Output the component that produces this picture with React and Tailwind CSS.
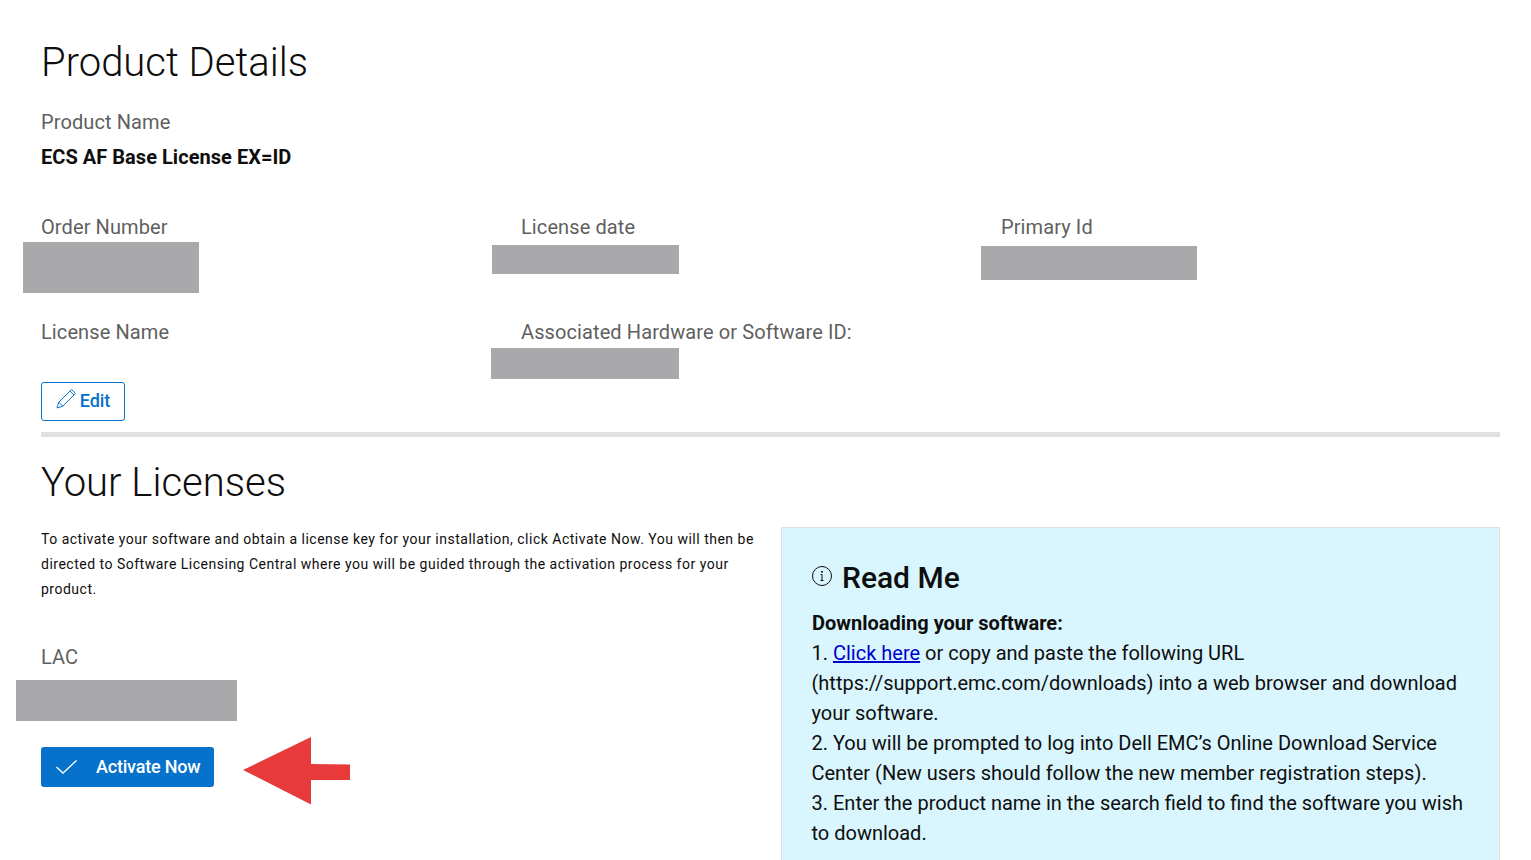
import React from "react";

function Label({ children }) {
  return <div className="text-[20px] leading-[24px] tracking-[0.1px] text-[#5f5f5f]">{children}</div>;
}

function Redacted({ className }) {
  return <div className={"absolute bg-[#a9a9ac] " + className} />;
}

export default function App() {
  return (
    <div className="relative h-screen overflow-hidden bg-white font-['Roboto',sans-serif] text-[#0e0e0e]">
      <div className="pl-[41px] pr-[31px] pt-[39px]">
        <h1 className="text-[40px] leading-[48px] font-light">Product Details</h1>

        <div className="mt-[23px]">
          <Label>Product Name</Label>
        </div>
        <div className="mt-[11px] text-[20px] leading-[24px] font-bold tracking-[0.04px]">ECS AF Base License EX=ID</div>

        <div className="mt-[46px] grid grid-cols-[480px_480px_1fr]">
          <Label>Order Number</Label>
          <Label>License date</Label>
          <Label>Primary Id</Label>
        </div>
        <div className="mt-[81px] grid grid-cols-[480px_1fr]">
          <Label>License Name</Label>
          <Label>Associated Hardware or Software ID:</Label>
        </div>

        <button className="mt-[38px] flex h-[39px] w-[84px] items-center justify-center gap-[3px] rounded-[3px] border border-[#0672cb] text-[18px] font-medium text-[#0672cb]">
          <svg width="21" height="21" viewBox="0 0 21 21" fill="none" stroke="currentColor" strokeWidth="1" className="mb-[7px]">
            <path d="M1 20l1.800-5.800L15.600 1.500l3.900 3.900L6.800 18.200z" />
            <path d="M2.800 14.200l4 4M14 3.100l3.900 3.900" />
          </svg>
          <span className="-translate-y-px">Edit</span>
        </button>

        <div className="mt-[11px] h-[5px] bg-[#e0e0e0]" />

        <h2 className="mt-[22px] text-[40px] leading-[48px] font-light">Your Licenses</h2>

        <div className="mt-[20px] grid grid-cols-[719px_719px] gap-x-[21px]">
          <div>
            <p className="text-[14px] leading-[25.200px] tracking-[0.5px]">
              To activate your software and obtain a license key for your installation, click Activate Now. You will then be directed to Software Licensing Central where you will be guided through the activation process for your product.
            </p>
            <div className="mt-[42px]">
              <Label>LAC</Label>
            </div>
            <button className="mt-[78px] flex h-[40px] w-[173px] items-center rounded-[3px] bg-[#0672cb] pl-[15px] text-[18px] font-medium text-white">
              <svg width="21" height="14" viewBox="0 0 21 14" fill="none" stroke="currentColor" strokeWidth="1.3">
                <path d="M0.500 7l6.500 6L20.500 0.500" />
              </svg>
              <span className="ml-[19px] tracking-[-0.2px]">Activate Now</span>
            </button>
          </div>

          <div className="h-[400px] border border-[#e0e0e0] bg-[#d9f5fd] pl-[30px] pr-[20px] pt-[32px] text-[20px] leading-[30px]">
            <div className="flex items-center gap-[10px]">
              <svg width="20" height="20" viewBox="0 0 20 20" fill="none" stroke="currentColor" strokeWidth="1" className="mb-[4px]">
                <circle cx="10" cy="10" r="9.500" />
                <path d="M10 8.500v6M8.500 8.500H10M8.500 14.500h3" />
                <circle cx="10" cy="5.800" r="0.600" fill="currentColor" />
              </svg>
              <h3 className="text-[30px] leading-[36px] font-medium">Read Me</h3>
            </div>
            <div className="mt-[12px] font-bold">Downloading your software:</div>
            <div className="-ml-[0.500px]">
              <p>
                1. <a href="#" className="text-[#0000cc] underline">Click here</a> or copy and paste the following URL (https://support.emc.com/downloads) into a web browser and download your software.
              </p>
              <p>2. You will be prompted to log into Dell EMC’s Online Download Service Center (New users should follow the new member registration steps).</p>
              <p>3. Enter the product name in the search field to find the software you wish to download.</p>
            </div>
          </div>
        </div>
      </div>

      {/* redaction boxes painted over the screenshot */}
      <Redacted className="left-[23px] top-[242px] h-[51px] w-[176px]" />
      <Redacted className="left-[492px] top-[245px] h-[29px] w-[187px]" />
      <Redacted className="left-[981px] top-[246px] h-[34px] w-[216px]" />
      <Redacted className="left-[491px] top-[348px] h-[31px] w-[188px]" />
      <Redacted className="left-[16px] top-[680px] h-[41px] w-[221px]" />

      <svg width="110" height="70" viewBox="0 0 110 70" className="absolute left-[242px] top-[736px]">
        <path d="M1 34L69 1V28L108 28.500V44L69 44V68.500Z" fill="#e83a3a" />
      </svg>
    </div>
  );
}
